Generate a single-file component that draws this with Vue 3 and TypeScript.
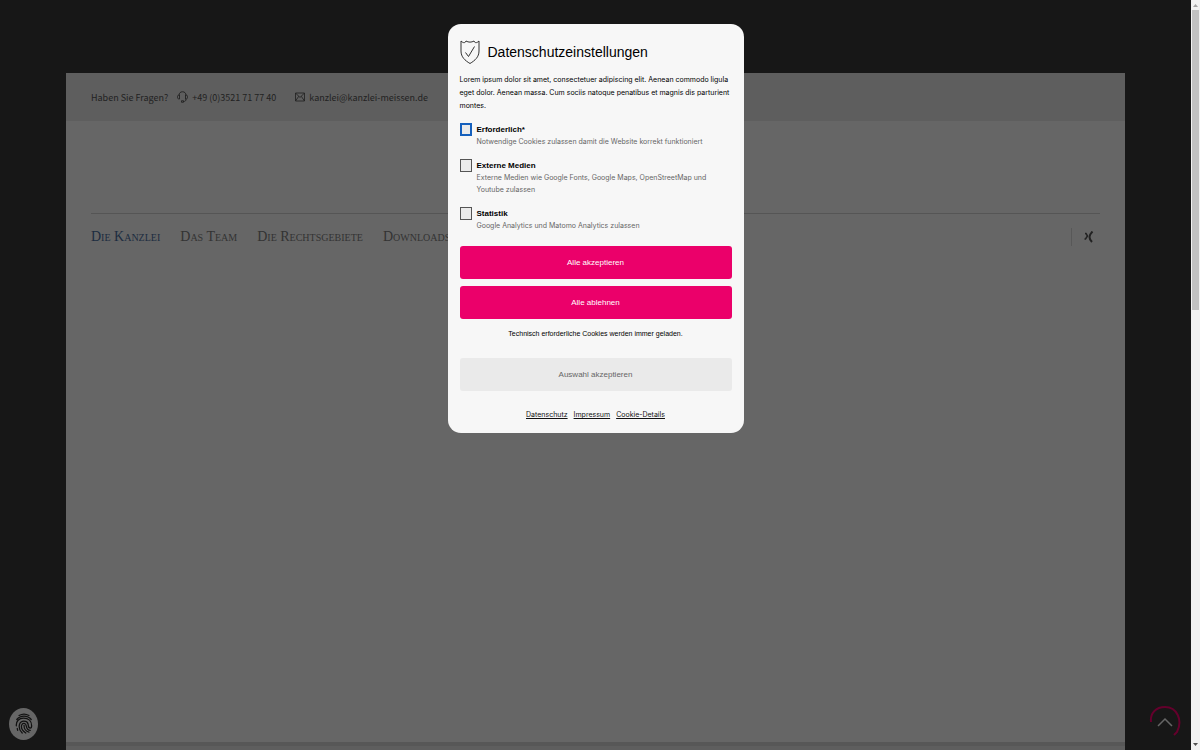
<script setup lang="ts">
import { ref } from 'vue'

interface CookieOption {
  id: string
  title: string
  text: string
}

const navItems: string[] = ['Die Kanzlei', 'Das Team', 'Die Rechtsgebiete', 'Downloads']
const options: CookieOption[] = [
  { id: 'required', title: 'Erforderlich*', text: 'Notwendige Cookies zulassen damit die Website korrekt funktioniert' },
  { id: 'media', title: 'Externe Medien', text: 'Externe Medien wie Google Fonts, Google Maps, OpenStreetMap und Youtube zulassen' },
  { id: 'stats', title: 'Statistik', text: 'Google Analytics und Matomo Analytics zulassen' },
]
const legalLinks: string[] = ['Datenschutz', 'Impressum', 'Cookie-Details']
const selected = ref<string[]>([])
</script>

<template>
  <div class="screen">
    <div class="viewport">
      <div class="site">
        <header class="topbar">
          <span class="question">Haben Sie Fragen?</span>
          <a class="contact phone" href="#">
            <svg width="11" height="12" viewBox="0 0 22 24" fill="none" stroke="currentColor" stroke-width="1.8">
              <path d="M4 9C4 4 7 1.500 11 1.500S18 4 18 9M5 8v8H3.500C2 16 1 14 1 12s1-4 2.500-4ZM17 8v8h1.500c1.500 0 2.500-2 2.500-4s-1-4-2.500-4ZM18 16c0 4-2 5-5 5M9 19.500h4v3H9Z" />
            </svg>
            <span>+49 (0)3521 71 77 40</span>
          </a>
          <a class="contact" href="#">
            <svg width="10" height="10" viewBox="0 0 20 20" fill="none" stroke="currentColor" stroke-width="1.700">
              <path d="M1 2h18v16H1ZM1 2l9 9 9-9M1 18l6.500-9.500M19 18l-6.500-9.500" />
            </svg>
            <span>kanzlei@kanzlei-meissen.de</span>
          </a>
        </header>
        <div class="brand"></div>
        <nav class="nav">
          <a v-for="(item, i) in navItems" :key="item" href="#" :class="{ active: i === 0 }">{{ item }}</a>
          <a class="xing" href="#" aria-label="Xing">
            <svg width="10" height="12" viewBox="0 0 20 24" fill="none" stroke="currentColor">
              <path d="M2 5h2l3 5-4 6H1" stroke-width="3" />
              <path d="M17 1c-3 3-6 7-6 11s2 7 5 10" stroke-width="4" />
            </svg>
          </a>
        </nav>
        <main class="content"></main>
        <div class="section-edge"></div>
      </div>
      <button class="fingerprint" type="button" aria-label="Cookie-Einstellungen">
        <svg width="18" height="22" viewBox="0 0 40 48" fill="none" stroke="currentColor" stroke-width="2.800" stroke-linecap="round">
          <path d="M9 5c7-4 15-4 22 0M4 14c8-10 24-10 32 0M3 28c-1-10 6-17 16-17 11 0 18 7 18 17 0 3-1 5-3 5-5 0-4-5-5-9-2-8-16-9-19 1-2 7 1 14 6 19M24 44c-8-5-11-12-9-18 2-5 9-4 10 2 1 6 4 10 9 10M20 27c0 7 4 14 11 15M5 34l1 4" />
        </svg>
      </button>
      <button class="to-top" type="button" aria-label="Nach oben">
        <svg width="32" height="36" viewBox="0 0 32 36" fill="none">
          <path d="M2 18C1 9 7 3 16 3c12 0 18 13 12 25l-3 3" stroke="#64002c" stroke-width="2" />
          <path d="M9 22l7-7 7 7" stroke="#666" stroke-width="1.500" />
        </svg>
      </button>
      <section class="dialog" role="dialog" aria-labelledby="dialog-title">
        <div class="heading">
          <svg width="20" height="24" viewBox="0 0 40 48" fill="none" stroke="#333" stroke-width="2">
            <path d="M2 2c4 4 7 4 9 2l1-2c5 3 11 3 16 0l1 2c2 2 5 2 9-2v20c0 12-8 19-18 25C10 41 2 34 2 22Z" />
            <path d="M11 25l6 8 12-20" />
          </svg>
          <h1 id="dialog-title">Datenschutzeinstellungen</h1>
        </div>
        <p class="intro">Lorem ipsum dolor sit amet, consectetuer adipiscing elit. Aenean commodo ligula eget dolor. Aenean massa. Cum sociis natoque penatibus et magnis dis parturient montes.</p>
        <div class="options">
          <div v-for="option in options" :key="option.id" class="option">
            <input :id="option.id" v-model="selected" type="checkbox" :value="option.id" :class="{ focused: option.id === 'required' }" />
            <label :for="option.id"><strong>{{ option.title }}</strong><span>{{ option.text }}</span></label>
          </div>
        </div>
        <div class="actions">
          <button type="button">Alle akzeptieren</button>
          <button type="button">Alle ablehnen</button>
        </div>
        <p class="note">Technisch erforderliche Cookies werden immer geladen.</p>
        <button class="accept-selection" type="button">Auswahl akzeptieren</button>
        <div class="legal">
          <a v-for="link in legalLinks" :key="link" href="#">{{ link }}</a>
        </div>
      </section>
    </div>
    <div class="scrollbar" aria-hidden="true">
      <svg width="9" height="10" viewBox="0 0 9 10"><path d="M2 7h5L4.500 4Z" fill="#a3a3a3" /></svg>
      <div class="thumb"></div>
      <svg width="9" height="10" viewBox="0 0 9 10"><path d="M2 3h5L4.500 6Z" fill="#505050" /></svg>
    </div>
  </div>
</template>

<style>
body {
  margin: 0;
  background: #171717;
}
</style>

<style scoped>
* {
  box-sizing: border-box;
}
.screen {
  display: flex;
  height: 100vh;
  font-family: "Liberation Sans", Arial, sans-serif;
}
.viewport {
  position: relative;
  flex: 1;
  display: flex;
  padding: 73px 66px 0;
  background: #171717;
}
.site {
  flex: 1;
  display: flex;
  flex-direction: column;
  background: #666;
}
.topbar {
  display: flex;
  align-items: center;
  height: 48px;
  padding: 0 25px;
  background: #5e5e5e;
  color: #222;
  font-family: "Noto Sans CJK SC", sans-serif;
  font-size: 9px;
  white-space: nowrap;
}
.contact {
  display: flex;
  align-items: center;
  gap: 4px;
  color: inherit;
  text-decoration: none;
}
.phone {
  margin: 0 19px 0 9px;
}
.brand {
  height: 93px;
  margin: 0 25px;
  border-bottom: 1px solid #555;
}
.nav {
  display: flex;
  align-items: center;
  gap: 20px;
  height: 45px;
  margin: 0 25px;
  font-family: "Liberation Serif", serif;
  font-size: 14px;
  font-variant: small-caps;
  white-space: nowrap;
}
.nav a {
  color: #333;
  text-decoration: none;
}
.nav a.active {
  color: #1c2c40;
}
.nav a.xing {
  display: flex;
  align-items: center;
  height: 18px;
  margin-left: auto;
  padding: 0 6px 0 12px;
  border-left: 1px solid #585858;
  color: #222;
}
.content {
  flex: 1;
}
.section-edge {
  height: 8px;
  border-top: 4px solid #575757;
  background: #5e5e5e;
}
button {
  padding: 0;
  border: 0;
  font-family: inherit;
  cursor: pointer;
}
.fingerprint {
  position: absolute;
  left: 9px;
  bottom: 10px;
  display: flex;
  align-items: center;
  justify-content: center;
  width: 29px;
  height: 32px;
  border-radius: 50%;
  background: #666;
  color: #111;
}
.to-top {
  position: absolute;
  right: 10px;
  bottom: 10px;
  display: flex;
  background: none;
}
.dialog {
  position: absolute;
  top: 24px;
  left: 50%;
  width: 296px;
  padding: 15px 12px 12px;
  border-radius: 13px;
  background: #f7f7f7;
  color: #000;
  transform: translateX(-50%);
}
.heading {
  display: flex;
  align-items: center;
  gap: 8px;
  height: 25px;
}
h1 {
  margin: 0;
  font-size: 14px;
  font-weight: 400;
}
p {
  margin: 0;
}
.intro {
  margin-top: 9px;
  font-family: Inter, "Liberation Sans", sans-serif;
  font-size: 7px;
  line-height: 13px;
}
.options {
  display: flex;
  flex-direction: column;
  gap: 11px;
  margin-top: 11px;
}
.option {
  display: flex;
  align-items: flex-start;
  gap: 5px;
}
.option input {
  appearance: none;
  flex: none;
  width: 12px;
  height: 13px;
  margin: 0;
  border: 1px solid #555;
  background: #ebebeb;
}
.option input.focused {
  border: 2px solid #1560bd;
}
.option label {
  display: flex;
  flex-direction: column;
  padding-right: 12px;
  font-family: Inter, "Liberation Sans", sans-serif;
  font-size: 7px;
  line-height: 12px;
}
.option strong {
  font-family: "Liberation Sans", Arial, sans-serif;
  font-size: 8px;
  line-height: 13px;
}
.option span {
  color: #666;
}
.actions {
  display: flex;
  flex-direction: column;
  gap: 7px;
  margin-top: 14px;
}
.actions button,
.accept-selection {
  width: 100%;
  height: 33px;
  border-radius: 3px;
  background: #eb006a;
  color: #fff;
  font-size: 8px;
}
.note {
  margin-top: 9px;
  font-size: 7px;
  line-height: 12px;
  text-align: center;
}
.accept-selection {
  margin-top: 18px;
  background: #eaeaea;
  color: #666;
}
.legal {
  display: flex;
  justify-content: center;
  gap: 6px;
  margin-top: 18px;
  font-family: Inter, "Liberation Sans", sans-serif;
  font-size: 7px;
  line-height: 12px;
}
.legal a {
  color: #111;
}
.scrollbar {
  display: flex;
  flex: none;
  flex-direction: column;
  justify-content: space-between;
  width: 9px;
  background: #f1f1f1;
}
.thumb {
  height: 40%;
  margin: 0 1px auto;
  background: #c1c1c1;
}
</style>
